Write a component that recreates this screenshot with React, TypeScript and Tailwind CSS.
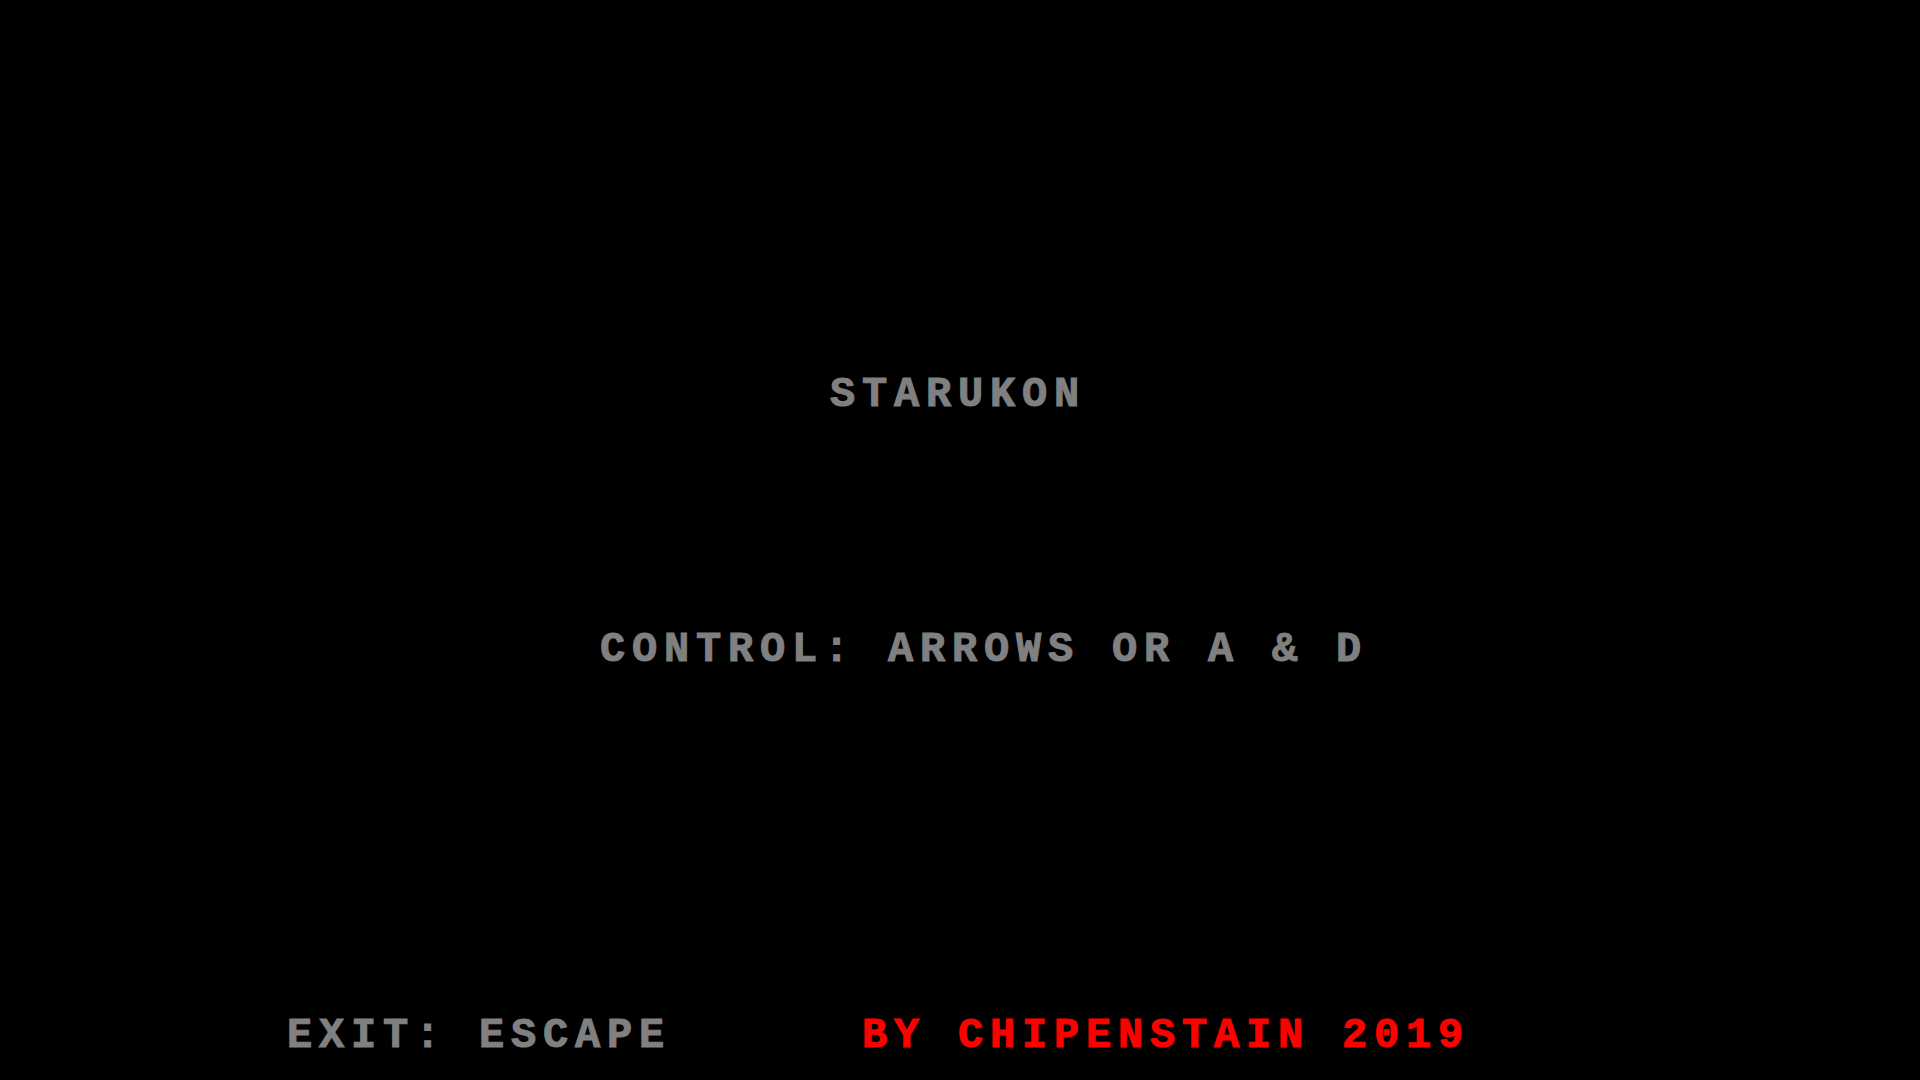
export default function App() {
  const mono = "font-['Liberation_Mono',monospace] font-bold text-[42px] leading-[42px] tracking-[6.8px] whitespace-pre [-webkit-text-stroke:1px_currentColor]"

  return (
    <div className="w-[1920px] h-[1080px] bg-black flex flex-col overflow-hidden">
      <div className={`${mono} text-[#808080] pt-[374px] pl-[830px]`}>STARUKON</div>
      <div className={`${mono} text-[#808080] pt-[213px] pl-[600px]`}>CONTROL: ARROWS OR A &amp; D</div>
      <div className="flex pt-[344px] pl-[287px]">
        <div className={`${mono} text-[#808080] w-[575px]`}>EXIT: ESCAPE</div>
        <div className={`${mono} text-[#ff0000]`}>BY CHIPENSTAIN 2019</div>
      </div>
    </div>
  )
}
